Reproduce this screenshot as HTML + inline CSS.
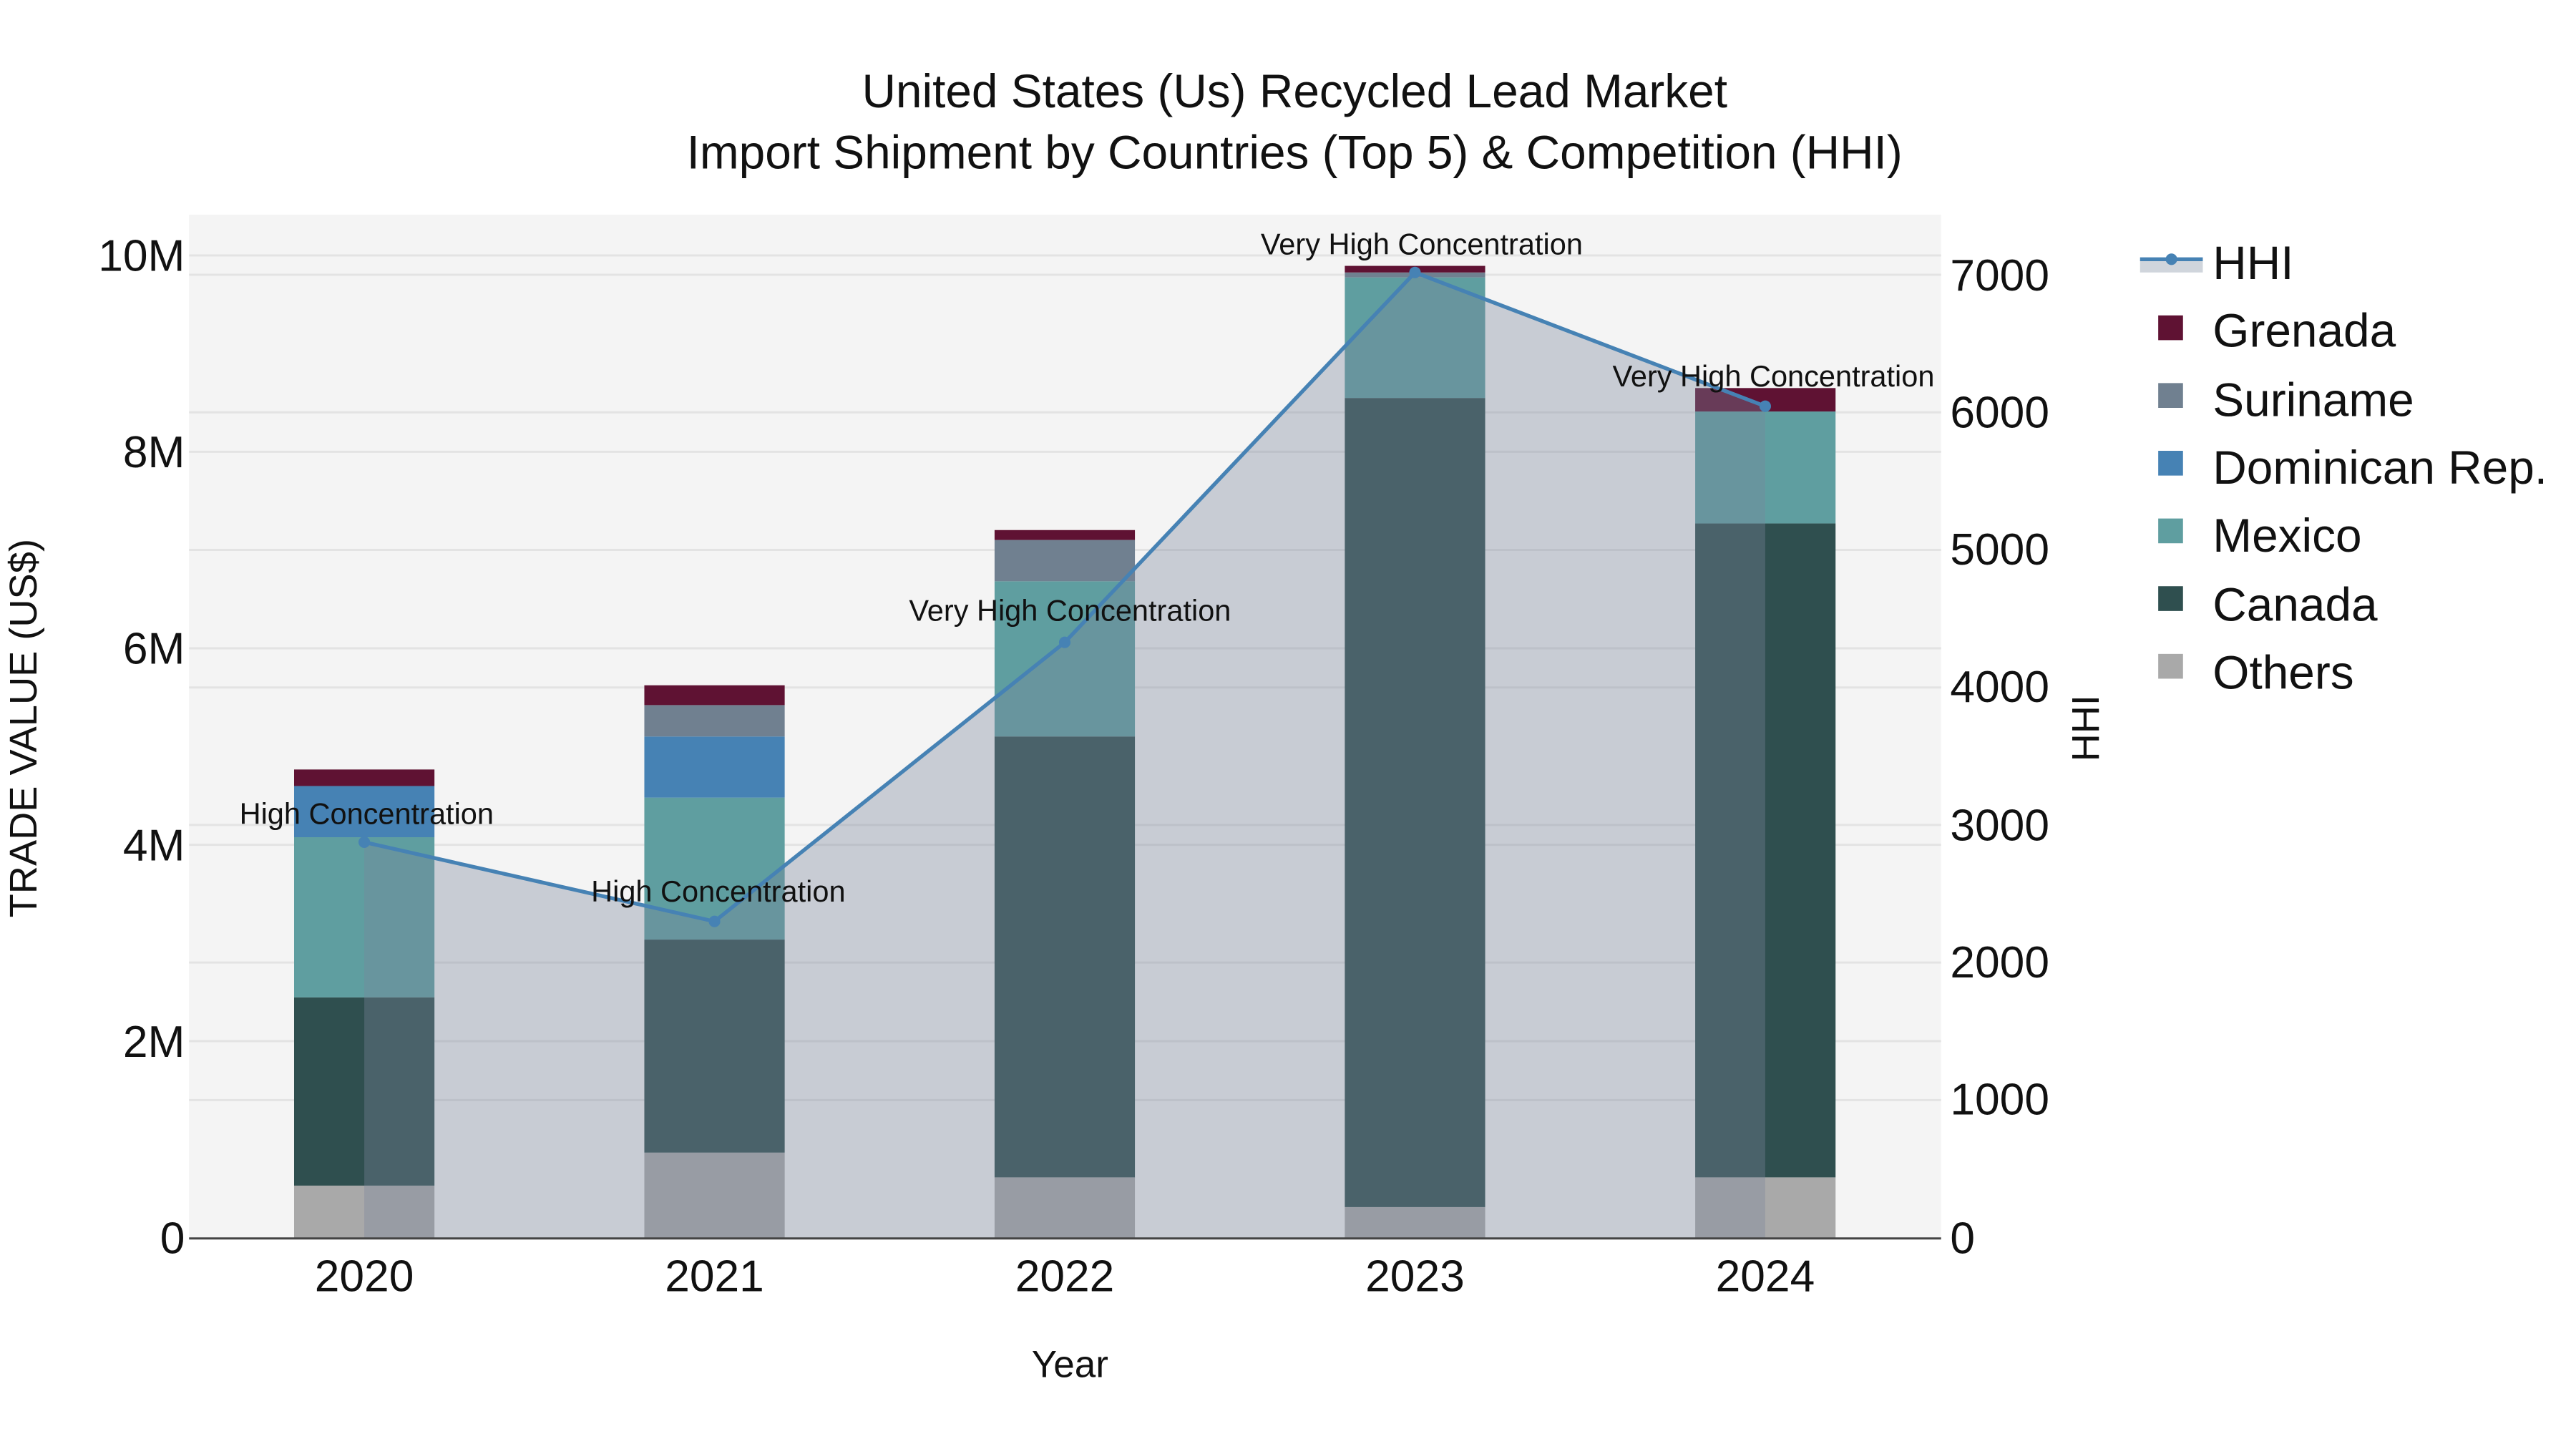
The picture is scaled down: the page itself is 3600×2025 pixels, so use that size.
<!DOCTYPE html>
<html><head><meta charset="utf-8"><style>
html,body{margin:0;padding:0;background:#fff;}
svg{display:block;}
text{font-family:"Liberation Sans",Arial,sans-serif;fill:#111;}
</style></head><body>
<svg width="3600" height="2025" viewBox="0 0 1560 877.5" xmlns="http://www.w3.org/2000/svg">
<rect x="0" y="0" width="1560" height="877.5" fill="#fff"/>
<text x="784" y="65" font-size="28.5" text-anchor="middle">United States (Us) Recycled Lead Market</text>
<text x="784" y="102" font-size="28.5" text-anchor="middle">Import Shipment by Countries (Top 5) &amp; Competition (HHI)</text>
<rect x="114.5" y="130" width="1061" height="620" fill="#f4f4f4"/>
<g stroke="#e3e3e3" stroke-width="1.3">
<line x1="114.5" x2="1175.5" y1="154.7" y2="154.7"/>
<line x1="114.5" x2="1175.5" y1="273.6" y2="273.6"/>
<line x1="114.5" x2="1175.5" y1="392.6" y2="392.6"/>
<line x1="114.5" x2="1175.5" y1="511.6" y2="511.6"/>
<line x1="114.5" x2="1175.5" y1="630.5" y2="630.5"/>
<line x1="114.5" x2="1175.5" y1="166.4" y2="166.4"/>
<line x1="114.5" x2="1175.5" y1="249.7" y2="249.7"/>
<line x1="114.5" x2="1175.5" y1="333" y2="333"/>
<line x1="114.5" x2="1175.5" y1="416.3" y2="416.3"/>
<line x1="114.5" x2="1175.5" y1="499.6" y2="499.6"/>
<line x1="114.5" x2="1175.5" y1="582.9" y2="582.9"/>
<line x1="114.5" x2="1175.5" y1="666.2" y2="666.2"/>
</g>
<g>
<rect x="178.1" y="718" width="85" height="31.5" fill="#a9a9a9"/>
<rect x="178.1" y="604" width="85" height="114" fill="#2f4f4f"/>
<rect x="178.1" y="507" width="85" height="97" fill="#5f9ea0"/>
<rect x="178.1" y="476" width="85" height="31" fill="#4682b4"/>
<rect x="178.1" y="466" width="85" height="10" fill="#5f1233"/>
<rect x="390.2" y="698" width="85" height="51.5" fill="#a9a9a9"/>
<rect x="390.2" y="569" width="85" height="129" fill="#2f4f4f"/>
<rect x="390.2" y="483" width="85" height="86" fill="#5f9ea0"/>
<rect x="390.2" y="446" width="85" height="37" fill="#4682b4"/>
<rect x="390.2" y="427" width="85" height="19" fill="#708090"/>
<rect x="390.2" y="415" width="85" height="12" fill="#5f1233"/>
<rect x="602.3" y="713" width="85" height="36.5" fill="#a9a9a9"/>
<rect x="602.3" y="446" width="85" height="267" fill="#2f4f4f"/>
<rect x="602.3" y="352" width="85" height="94" fill="#5f9ea0"/>
<rect x="602.3" y="327" width="85" height="25" fill="#708090"/>
<rect x="602.3" y="321" width="85" height="6" fill="#5f1233"/>
<rect x="814.4" y="731" width="85" height="18.5" fill="#a9a9a9"/>
<rect x="814.4" y="241" width="85" height="490" fill="#2f4f4f"/>
<rect x="814.4" y="168" width="85" height="73" fill="#5f9ea0"/>
<rect x="814.4" y="165" width="85" height="3" fill="#708090"/>
<rect x="814.4" y="161" width="85" height="4" fill="#5f1233"/>
<rect x="1026.6" y="713" width="85" height="36.5" fill="#a9a9a9"/>
<rect x="1026.6" y="317" width="85" height="396" fill="#2f4f4f"/>
<rect x="1026.6" y="249.2" width="85" height="67.8" fill="#5f9ea0"/>
<rect x="1026.6" y="235" width="85" height="14.2" fill="#5f1233"/>
</g>
<polygon points="220.6,749.5 220.6,510 432.7,558 644.8,389 856.9,165 1069,246 1069,749.5" fill="rgba(122,133,156,0.36)"/>
<polyline points="220.6,510 432.7,558 644.8,389 856.9,165 1069,246" fill="none" stroke="#4682b4" stroke-width="2.3"/>
<g fill="#4682b4">
<circle cx="220.6" cy="510" r="3.5"/><circle cx="432.7" cy="558" r="3.5"/><circle cx="644.8" cy="389" r="3.5"/><circle cx="856.9" cy="165" r="3.5"/><circle cx="1069" cy="246" r="3.5"/>
</g>
<line x1="114.5" x2="1175.5" y1="750" y2="750" stroke="#444" stroke-width="1.3"/>
<g font-size="18" text-anchor="middle">
<text x="222" y="499">High Concentration</text>
<text x="435" y="546">High Concentration</text>
<text x="648" y="376">Very High Concentration</text>
<text x="861" y="154">Very High Concentration</text>
<text x="1074" y="234">Very High Concentration</text>
</g>
<g font-size="27" text-anchor="end">
<text x="112" y="164">10M</text>
<text x="112" y="283">8M</text>
<text x="112" y="402">6M</text>
<text x="112" y="521">4M</text>
<text x="112" y="640">2M</text>
<text x="112" y="759">0</text>
</g>
<g font-size="27" text-anchor="start">
<text x="1181" y="176">7000</text>
<text x="1181" y="259">6000</text>
<text x="1181" y="342">5000</text>
<text x="1181" y="425">4000</text>
<text x="1181" y="509">3000</text>
<text x="1181" y="592">2000</text>
<text x="1181" y="675">1000</text>
<text x="1181" y="759">0</text>
</g>
<g font-size="27" text-anchor="middle">
<text x="220.6" y="782">2020</text>
<text x="432.7" y="782">2021</text>
<text x="644.8" y="782">2022</text>
<text x="856.9" y="782">2023</text>
<text x="1069" y="782">2024</text>
</g>
<text x="648" y="834" font-size="23" text-anchor="middle">Year</text>
<text transform="translate(22,441) rotate(-90)" font-size="23.5" text-anchor="middle">TRADE VALUE (US$)</text>
<text transform="translate(1271,441) rotate(-90)" font-size="23.5" text-anchor="middle">HHI</text>
<rect x="1296" y="158" width="38" height="7" fill="#d0d5dc"/>
<line x1="1296" x2="1334" y1="157" y2="157" stroke="#4682b4" stroke-width="2.3"/>
<circle cx="1315" cy="157" r="3.5" fill="#4682b4"/>
<rect x="1307" y="191" width="15" height="15" fill="#5f1233"/>
<rect x="1307" y="232" width="15" height="15" fill="#708090"/>
<rect x="1307" y="273" width="15" height="15" fill="#4682b4"/>
<rect x="1307" y="314" width="15" height="15" fill="#5f9ea0"/>
<rect x="1307" y="355" width="15" height="15" fill="#2f4f4f"/>
<rect x="1307" y="396" width="15" height="15" fill="#a9a9a9"/>
<g font-size="28.5">
<text x="1340" y="169">HHI</text>
<text x="1340" y="210">Grenada</text>
<text x="1340" y="252">Suriname</text>
<text x="1340" y="293">Dominican Rep.</text>
<text x="1340" y="334">Mexico</text>
<text x="1340" y="376">Canada</text>
<text x="1340" y="417">Others</text>
</g>
</svg>
</body></html>
